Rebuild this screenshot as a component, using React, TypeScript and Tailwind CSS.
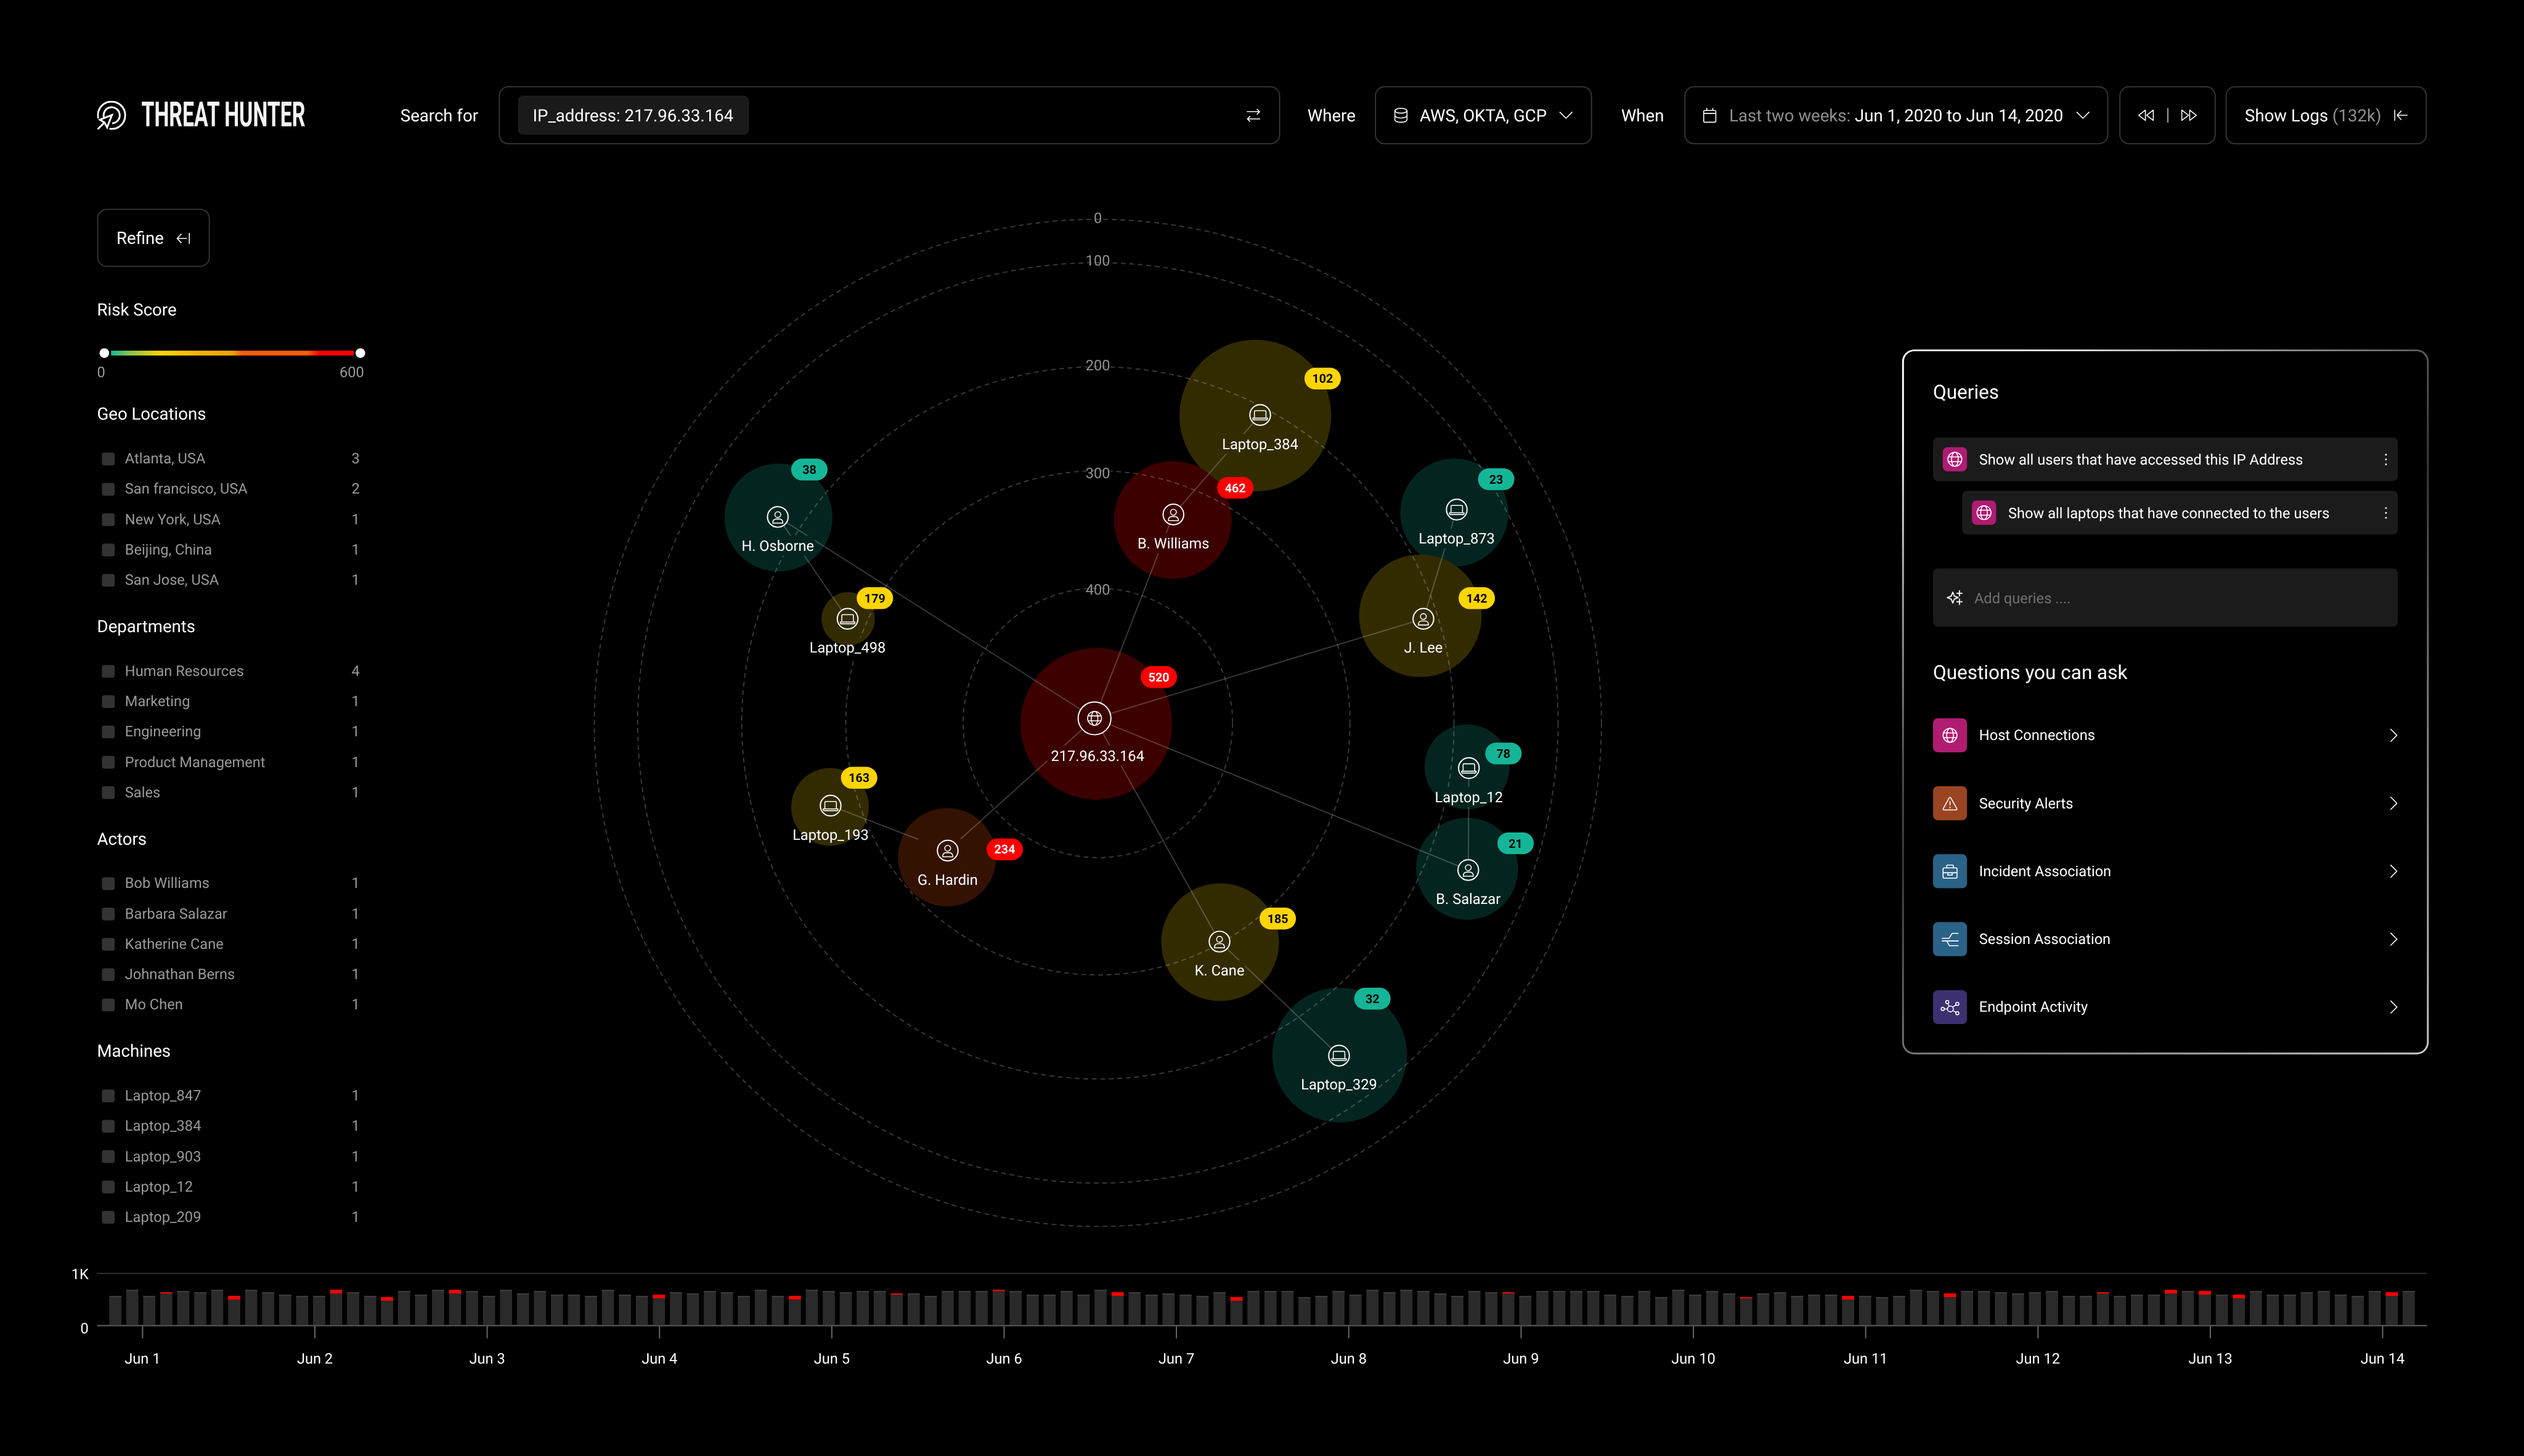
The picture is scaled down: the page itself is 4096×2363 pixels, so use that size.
import React from "react";

/* ---------- icons ---------- */

const stroke = {
  fill: "none",
  stroke: "currentColor",
  strokeWidth: 1.6,
} as const;

const LogoMark = () => (
  <svg viewBox="0 0 48 48" className="size-12" {...stroke} strokeWidth={3}>
    <path d="M1.9 29A22.5 22.5 0 1 1 20.5 46.3" />
    <path d="M11.2 27.5A13.3 13.3 0 1 1 25 37.3" />
    <path d="M24.5 23.5 4.5 31.3l7.6 4.4 4.4 8.3z" />
    <path d="M12.3 35.7 1 47" />
  </svg>
);

const SwapIcon = () => (
  <svg viewBox="0 0 24 24" className="size-6" {...stroke}>
    <path d="M1 6h21M17.5 1.5 22 6l-4.5 4.500M23 18H2M6.500 13.500 2 18l4.500 4.500" />
  </svg>
);

const DatabaseIcon = () => (
  <svg viewBox="0 0 24 26" className="h-[26px] w-6" {...stroke}>
    <path d="M2 5.500v15c0 2 4 4 10 4s10-2 10-4v-15" />
    <ellipse cx="12" cy="5.500" rx="10" ry="4" />
    <path d="M2 13.500c0 2 4 4 10 4s10-2 10-4" />
  </svg>
);

const CalendarIcon = () => (
  <svg viewBox="0 0 24 26" className="h-[26px] w-6" {...stroke}>
    <rect x="2" y="5" width="20" height="19.500" rx="2" />
    <path d="M2 10h20M7 1v4M17 1v4" />
  </svg>
);

const ChevronDown = () => (
  <svg viewBox="0 0 24 14" className="h-[14px] w-6" {...stroke}>
    <path d="M1.500 1.500 12 12 22.500 1.500" />
  </svg>
);

const ChevronRight = () => (
  <svg viewBox="0 0 14 24" className="h-6 w-[14px]" {...stroke}>
    <path d="M2 1.500 12.500 12 2 22.500" />
  </svg>
);

const RewindIcon = () => (
  <svg viewBox="0 0 28 20" className="h-5 w-7" {...stroke} strokeLinejoin="round">
    <path d="M13 1.500v17L2 10zM26 1.500v17L15 10z" />
  </svg>
);

const ForwardIcon = () => (
  <svg viewBox="0 0 28 20" className="h-5 w-7" {...stroke} strokeLinejoin="round">
    <path d="M2 1.500v17L13 10zM15 1.500v17L26 10z" />
  </svg>
);

const CollapseIcon = () => (
  <svg viewBox="0 0 24 20" className="h-5 w-6" {...stroke}>
    <path d="M22 1v18M18 10H2M9 2.500 2 10l7 7.500" />
  </svg>
);

const ExpandIcon = () => (
  <svg viewBox="0 0 24 20" className="h-5 w-6" {...stroke}>
    <path d="M2 1v18M23 10H6M13 2.500 6 10l7 7.500" />
  </svg>
);

const SparkleIcon = () => (
  <svg viewBox="0 0 28 26" className="h-[26px] w-7" {...stroke} strokeWidth={1.8}>
    <path d="M10.500 4 13 10.500l6.500 2.500-6.500 2.500L10.500 22 8 15.500 1.500 13 8 10.500z" strokeLinejoin="round" />
    <path d="M21.500 1v10M16.500 6h10M21.500 15v10M16.500 20h10" />
  </svg>
);

const GlobeShape = () => (
  <g>
    <circle r="11.500" />
    <ellipse rx="5.500" ry="11.500" />
    <path d="M-10.800-4h21.600M-10.800 4h21.600" />
  </g>
);

const UserShape = () => (
  <g>
    <circle cy="-3.800" r="4.800" />
    <path d="M-8.200 10.200V8.800A5.300 5.300 0 0 1-2.900 3.500h5.800A5.300 5.300 0 0 1 8.200 8.800v1.400z" />
  </g>
);

const LaptopShape = () => (
  <g>
    <path d="M-9.500 4.500v-10a1.500 1.500 0 0 1 1.500-1.500h16a1.500 1.500 0 0 1 1.500 1.500v10" />
    <path d="M-12 5.200h24v1.500a1.500 1.500 0 0 1-1.500 1.500h-21a1.500 1.500 0 0 1-1.500-1.500z" />
  </g>
);

const AlertShape = () => (
  <g strokeLinejoin="round">
    <path d="M-1.500-8.600a1.700 1.700 0 0 1 3 0l9.800 17.700a1.400 1.400 0 0 1-1.300 2h-20a1.400 1.400 0 0 1-1.300-2z" />
    <path d="M0-3.500v7M0 5.800v2.400" />
  </g>
);

const BriefcaseShape = () => (
  <g>
    <rect x="-11.500" y="-5.500" width="23" height="17" rx="2" />
    <path d="M-5.500-5.500v-3a1.500 1.500 0 0 1 1.500-1.500h8a1.500 1.500 0 0 1 1.500 1.500v3M-11.500 2.500h23M-3.500 2.500v4h7v-4" />
  </g>
);

const SessionShape = () => (
  <path d="M-13.500-1.500h12l5-8h10.500M-13.500 3H14M-5.500 3l4.500 7.800h15" />
);

const EndpointShape = () => (
  <g>
    <circle cx=".6" cy="3" r="4.800" />
    <circle cx="-4.600" cy="-8.300" r="2.600" />
    <circle cx="12" cy="-5.300" r="2.600" />
    <circle cx="-12" cy="3" r="2.600" />
    <circle cx="12" cy="10" r="2.600" />
    <path d="M-3.500-6-1.500-1.300M9.800-3.600 4.500 0M-9.400 3h5M9.800 8.600 4.600 5.700" />
  </g>
);

type Tile = { Shape: () => React.JSX.Element; tile: string };

const IconTile = ({ Shape, tile, small }: Tile & { small?: boolean }) => (
  <span
    className={`flex shrink-0 items-center justify-center rounded-lg ${tile} ${small ? "size-10" : "size-14"}`}
  >
    <svg viewBox="-16 -16 32 32" className="size-8" {...stroke}>
      <Shape />
    </svg>
  </span>
);

/* ---------- header ---------- */

const box = "flex h-24 shrink-0 items-center rounded-2xl border-2 border-[#333333]";

const Header = () => (
  <header className="flex h-24 items-center text-[28px]">
    <div className="flex w-[500px] shrink-0 items-center gap-[25px]">
      <LogoMark />
      <h1 className="w-[268px] origin-left scale-x-[0.603] pb-1 text-[57px] leading-none font-bold whitespace-nowrap text-[#f5f5f5]">
        THREAT HUNTER
      </h1>
    </div>
    <span className="w-[162px] shrink-0 pt-0.5">Search for</span>
    <div className={`${box} w-[1288px] justify-between pr-[30px] pl-[30px]`}>
      <span className="flex h-16 w-[380px] items-center rounded-lg border-2 border-[#1f1f1f] bg-[#1a1a1a] pt-0.5 pl-[22px]">
        IP_address: 217.96.33.164
      </span>
      <SwapIcon />
    </div>
    <span className="ml-[45px] w-[111px] shrink-0 pt-0.5">Where</span>
    <div className={`${box} w-[358px] pl-[29px]`}>
      <DatabaseIcon />
      <span className="ml-[19px] w-[229px] pt-0.5">AWS, OKTA, GCP</span>
      <ChevronDown />
    </div>
    <span className="ml-12 w-[104px] shrink-0 pt-0.5">When</span>
    <div className={`${box} w-[699px] pl-[28px]`}>
      <CalendarIcon />
      <span className="ml-[20px] w-[571px] pt-0.5 whitespace-nowrap">
        <span className="text-[#8f8f8f]">Last two weeks: </span>Jun 1, 2020 to Jun 14, 2020
      </span>
      <ChevronDown />
    </div>
    <div className={`${box} ml-[18px] w-[159px] justify-between px-[28px]`}>
      <RewindIcon />
      <span className="h-6 w-0.5 bg-[#a0a0a0]" />
      <ForwardIcon />
    </div>
    <div className={`${box} ml-4 w-[332px] justify-between pr-[29px] pl-[30px]`}>
      <span className="pt-0.5">
        Show Logs <span className="text-[#8f8f8f]">(132k)</span>
      </span>
      <ExpandIcon />
    </div>
  </header>
);

/* ---------- sidebar ---------- */

const groups: { title: string; items: [string, number][] }[] = [
  {
    title: "Geo Locations",
    items: [
      ["Atlanta, USA", 3],
      ["San francisco, USA", 2],
      ["New York, USA", 1],
      ["Beijing, China", 1],
      ["San Jose, USA", 1],
    ],
  },
  {
    title: "Departments",
    items: [
      ["Human Resources", 4],
      ["Marketing", 1],
      ["Engineering", 1],
      ["Product Management", 1],
      ["Sales", 1],
    ],
  },
  {
    title: "Actors",
    items: [
      ["Bob Williams", 1],
      ["Barbara Salazar", 1],
      ["Katherine Cane", 1],
      ["Johnathan Berns", 1],
      ["Mo Chen", 1],
    ],
  },
  {
    title: "Machines",
    items: [
      ["Laptop_847", 1],
      ["Laptop_384", 1],
      ["Laptop_903", 1],
      ["Laptop_12", 1],
      ["Laptop_209", 1],
    ],
  },
];

const Sidebar = () => (
  <aside className="w-[448px] shrink-0">
    <button className={`${box} w-[186px] gap-[20px] pt-0.5 pl-[30px] text-[28px]`}>
      Refine <CollapseIcon />
    </button>
    <h2 className="mt-[51px] text-[28px] leading-10">Risk Score</h2>
    <div className="mt-[43px] flex items-center gap-[3px] pl-1">
      <span className="size-4 rounded-full bg-white" />
      <span className="h-2 w-[400px] bg-[linear-gradient(90deg,#15b79a_0%,#8bc64a_8%,#ffd500_21%,#f5b800_34%,#f0a400_50%,#ff5c0c_54%,#ff5c0c_81%,#ff0000_86%)]" />
      <span className="size-4 rounded-full bg-white" />
    </div>
    <div className="mt-2 flex w-[440px] justify-between text-2xl text-[#999999]">
      <span>0</span>
      <span>600</span>
    </div>
    <div className="mt-[33px]">
      {groups.map((g) => (
        <section key={g.title} className="h-[350px]">
          <h2 className="text-[28px] leading-10">{g.title}</h2>
          <ul className="mt-7">
            {g.items.map(([name, count]) => (
              <li key={name} className="flex h-[50px] w-[433px] items-center pl-2 text-2xl text-[#999999]">
                <span className="size-[21px] rounded-sm bg-[#333333]" />
                <span className="ml-[17px] flex-1">{name}</span>
                <span>{count}</span>
              </li>
            ))}
          </ul>
        </section>
      ))}
    </div>
  </aside>
);

/* ---------- graph ---------- */

const OX = 960;
const OY = 344;
const CX = 1809.5;
const CY = 1191.5;

const rings = [
  { label: "0", r: 830, y: 360 },
  { label: "100", r: 758.5, y: 430 },
  { label: "200", r: 587, y: 602 },
  { label: "300", r: 415.5, y: 780 },
  { label: "400", r: 222, y: 972 },
];

type Tone = "red" | "yellow" | "teal" | "orange";

const discFill: Record<Tone, string> = {
  red: "#3c0000",
  yellow: "#332b00",
  teal: "#04251f",
  orange: "#331202",
};

const badgeTone: Record<Tone, string> = {
  red: "bg-[#ff0000] text-white",
  orange: "bg-[#ff0000] text-white",
  yellow: "bg-[#ffd500] text-black",
  teal: "bg-[#15b598] text-black",
};

type GraphNode = {
  id: string;
  kind: "user" | "laptop" | "ip";
  tone: Tone;
  disc: [number, number, number];
  icon: [number, number];
  w: number;
  score: number;
  badge: [number, number];
};

const nodes: GraphNode[] = [
  { id: "Laptop_384", kind: "laptop", tone: "yellow", disc: [2069, 685, 125], icon: [2077, 684], w: 125, score: 102, badge: [2180, 624] },
  { id: "B. Williams", kind: "user", tone: "red", disc: [1933, 857, 97], icon: [1934, 848], w: 117, score: 462, badge: [2036, 804] },
  { id: "Laptop_873", kind: "laptop", tone: "teal", disc: [2397, 845, 89], icon: [2401, 840], w: 125, score: 23, badge: [2466, 790] },
  { id: "J. Lee", kind: "user", tone: "yellow", disc: [2341, 1015, 101], icon: [2346, 1020], w: 63, score: 142, badge: [2434, 986] },
  { id: "217.96.33.164", kind: "ip", tone: "red", disc: [1807, 1193, 125], icon: [1804, 1184], w: 153, score: 520, badge: [1910, 1116] },
  { id: "Laptop_12", kind: "laptop", tone: "teal", disc: [2418, 1264, 70], icon: [2421, 1266], w: 112, score: 78, badge: [2478, 1242] },
  { id: "B. Salazar", kind: "user", tone: "teal", disc: [2418, 1432, 84], icon: [2420, 1434], w: 105, score: 21, badge: [2498, 1390] },
  { id: "H. Osborne", kind: "user", tone: "teal", disc: [1283, 853, 89], icon: [1282, 852], w: 120, score: 38, badge: [1334, 774] },
  { id: "Laptop_498", kind: "laptop", tone: "yellow", disc: [1398, 1020, 44], icon: [1397, 1020], w: 125, score: 179, badge: [1442, 986] },
  { id: "Laptop_193", kind: "laptop", tone: "yellow", disc: [1368, 1330, 64], icon: [1369, 1328], w: 125, score: 163, badge: [1416, 1282] },
  { id: "G. Hardin", kind: "user", tone: "orange", disc: [1561, 1413, 81], icon: [1562, 1402], w: 98, score: 234, badge: [1656, 1400] },
  { id: "K. Cane", kind: "user", tone: "yellow", disc: [2011, 1553, 97], icon: [2010, 1552], w: 82, score: 185, badge: [2106, 1514] },
  { id: "Laptop_329", kind: "laptop", tone: "teal", disc: [2208, 1739, 111], icon: [2207, 1740], w: 125, score: 32, badge: [2262, 1646] },
];

const links: [string, string][] = [
  ["217.96.33.164", "H. Osborne"],
  ["217.96.33.164", "B. Williams"],
  ["217.96.33.164", "J. Lee"],
  ["217.96.33.164", "B. Salazar"],
  ["217.96.33.164", "K. Cane"],
  ["217.96.33.164", "G. Hardin"],
  ["B. Williams", "Laptop_384"],
  ["J. Lee", "Laptop_873"],
  ["B. Salazar", "Laptop_12"],
  ["H. Osborne", "Laptop_498"],
  ["G. Hardin", "Laptop_193"],
  ["K. Cane", "Laptop_329"],
];

const byId = Object.fromEntries(nodes.map((n) => [n.id, n]));
const labelY = (n: GraphNode) => n.icon[1] + (n.kind === "ip" ? 62 : 48);

const Graph = () => (
  <section className="relative ml-[352px] h-[1700px] w-[1700px] shrink-0">
    <svg viewBox={`${OX} ${OY} 1700 1700`} className="size-full" fill="none">
      <mask id="clear" maskUnits="userSpaceOnUse" x={OX} y={OY} width="1700" height="1700">
        <rect x={OX} y={OY} width="1700" height="1700" fill="white" />
        {nodes.map((n) => (
          <g key={n.id} fill="black">
            <circle cx={n.icon[0]} cy={n.icon[1]} r={n.kind === "ip" ? 28 : 18} />
            <rect x={n.icon[0] - n.w / 2 - 1} y={labelY(n) - 17} width={n.w + 2} height="33" />
          </g>
        ))}
        <rect x="1513" y="1383" width="98" height="80" fill="black" />
      </mask>
      {nodes.map((n) => (
        <circle key={n.id} cx={n.disc[0]} cy={n.disc[1]} r={n.disc[2]} fill={discFill[n.tone]} />
      ))}
      <g mask="url(#clear)" stroke="white" strokeOpacity="0.22" strokeWidth="2">
        {rings.map((r) => (
          <circle key={r.label} cx={CX} cy={CY} r={r.r} strokeDasharray="8 6" />
        ))}
        {links.map(([a, b]) => (
          <line key={a + b} x1={byId[a].icon[0]} y1={byId[a].icon[1]} x2={byId[b].icon[0]} y2={byId[b].icon[1]} />
        ))}
      </g>
      <g stroke="white" strokeWidth="1.6">
        {nodes.map((n) => (
          <g key={n.id} transform={`translate(${n.icon[0]} ${n.icon[1]})`}>
            <circle r={n.kind === "ip" ? 27 : 17} strokeWidth="2" />
            {n.kind === "ip" && <GlobeShape />}
            {n.kind === "user" && <UserShape />}
            {n.kind === "laptop" && <LaptopShape />}
          </g>
        ))}
      </g>
    </svg>
    {rings.map((r) => (
      <span
        key={r.label}
        className="absolute -translate-x-1/2 -translate-y-1/2 text-2xl text-[#8f8f8f]"
        style={{ left: CX - OX, top: r.y - OY }}
      >
        {r.label}
      </span>
    ))}
    {nodes.map((n) => (
      <React.Fragment key={n.id}>
        <span
          className="absolute -translate-x-1/2 -translate-y-1/2 text-2xl whitespace-nowrap"
          style={{ left: n.icon[0] + (n.kind === "ip" ? 5 : 0) - OX, top: labelY(n) - OY }}
        >
          {n.id}
        </span>
        <span
          className={`absolute flex h-9 w-[60px] -translate-x-1/2 -translate-y-1/2 items-center justify-center rounded-full text-xl font-bold ${badgeTone[n.tone]}`}
          style={{ left: n.badge[0] - OX, top: n.badge[1] - OY }}
        >
          {n.score}
        </span>
      </React.Fragment>
    ))}
  </section>
);

/* ---------- queries panel ---------- */

const Dots = () => (
  <span className="flex w-[3px] flex-col gap-[5px]">
    <i className="size-[3px] rounded-full bg-white" />
    <i className="size-[3px] rounded-full bg-white" />
    <i className="size-[3px] rounded-full bg-white" />
  </span>
);

const Query = ({ text, nested }: { text: string; nested?: boolean }) => (
  <div
    className={`flex h-[72px] items-center rounded-lg bg-[#1b1b1b] pr-[18px] pl-4 text-2xl ${nested ? "mt-4 ml-12" : ""}`}
  >
    <IconTile Shape={GlobeShape} tile="bg-[#b01c72]" small />
    <span className="ml-5 flex-1 pt-px">{text}</span>
    <Dots />
  </div>
);

const questions: (Tile & { label: string })[] = [
  { label: "Host Connections", Shape: GlobeShape, tile: "bg-[#b01c72]" },
  { label: "Security Alerts", Shape: AlertShape, tile: "bg-[#9a4421]" },
  { label: "Incident Association", Shape: BriefcaseShape, tile: "bg-[#2a6288]" },
  { label: "Session Association", Shape: SessionShape, tile: "bg-[#2a6288]" },
  { label: "Endpoint Activity", Shape: EndpointShape, tile: "bg-[#3d3070]" },
];

const QueriesPanel = () => (
  <section className="mt-[232px] ml-[475px] h-[1162px] w-[868px] shrink-0 rounded-[20px] bg-[linear-gradient(143deg,#ffffff_8%,#b0b0b0_20%,#777777_32%,#555555_37%,#3a3a3a_47%,#777777_65%,#c8c8c8_100%)] p-[3px]">
    <div className="h-full rounded-[17px] bg-black px-12 pt-[47px]">
      <h2 className="text-[32px] leading-10">Queries</h2>
      <div className="mt-[55px]">
        <Query text="Show all users that have accessed this IP Address" />
        <Query text="Show all laptops that have connected to the users" nested />
      </div>
      <div className="mt-14 flex h-24 items-center gap-[18px] rounded-lg bg-[#1b1b1b] pl-[22px] text-2xl text-white">
        <SparkleIcon />
        <span className="pt-px text-[#707070]">Add queries ....</span>
      </div>
      <h2 className="mt-[55px] text-[32px] leading-10">Questions you can ask</h2>
      <ul className="mt-[56px] flex flex-col gap-14">
        {questions.map((q) => (
          <li key={q.label} className="flex h-14 items-center text-2xl">
            <IconTile Shape={q.Shape} tile={q.tile} />
            <span className="ml-5 flex-1">{q.label}</span>
            <ChevronRight />
          </li>
        ))}
      </ul>
    </div>
  </section>
);

/* ---------- timeline ---------- */

const bars = [
  48, 58, 48, 54, 56, 54, 58, 48, 58, 54, 50, 48, 48, 58, 54, 48, 46, 56, 50, 58, 58, 56, 48, 58, 52, 56, 50, 50, 48,
  58, 50, 48, 50, 54, 52, 56, 54, 48, 58, 48, 48, 58, 56, 54, 56, 56, 52, 52, 48, 56, 56, 56, 58, 56, 50, 50, 56, 50,
  58, 54, 54, 50, 52, 50, 48, 54, 46, 56, 56, 56, 46, 48, 56, 50, 58, 54, 58, 56, 52, 48, 56, 54, 54, 48, 56, 56, 56,
  56, 50, 48, 56, 46, 58, 50, 56, 52, 46, 52, 54, 48, 50, 50, 48, 48, 46, 48, 58, 56, 52, 56, 56, 54, 52, 54, 56, 48,
  48, 54, 48, 50, 50, 58, 56, 56, 50, 50, 56, 50, 50, 54, 56, 50, 48, 56, 54, 56,
];
const thinAlerts = new Set([3, 46, 52, 82, 96, 117]);
const alerts = new Set([7, 13, 16, 20, 32, 40, 59, 66, 102, 108, 121, 123, 125, 134]);

const capClass = (i: number) =>
  alerts.has(i) ? "h-1.5 bg-[#ff0000]" : thinAlerts.has(i) ? "h-0.5 bg-[#ff0000]" : "h-0.5 bg-[#3c3f3d]";

const Timeline = () => (
  <footer className="mt-[54px] flex text-2xl">
    <div className="-ml-[60px] flex h-[106px] w-[60px] shrink-0 flex-col items-end justify-between pr-[14px] leading-7">
      <span className="-mt-[12px]">1K</span>
      <span>0</span>
    </div>
    <div className="w-[3840px]">
      <div className="flex h-[88px] items-end gap-2 border-t-2 border-b-2 border-t-[#333333] border-b-[#666666] pl-5">
        {bars.map((h, i) => (
          <div key={i} className="w-5 bg-[#2a2a2a]" style={{ height: h }}>
            <div className={capClass(i)} />
          </div>
        ))}
      </div>
      <div className="-ml-[67px] flex">
        {Array.from({ length: 14 }, (_, i) => (
          <div key={i} className="flex w-[284px] shrink-0 flex-col items-center">
            <span className="h-5 w-0.5 bg-[#666666]" />
            <span className="mt-5 leading-7">Jun {i + 1}</span>
          </div>
        ))}
      </div>
    </div>
  </footer>
);

export default function App() {
  return (
    <div className="h-[2363px] w-[4096px] overflow-hidden bg-black">
      <div className="flex h-[2400px] w-[4160px] origin-top-left scale-[0.984615] flex-col bg-black px-[160px] pt-[142px] font-['Roboto',sans-serif] text-white [text-rendering:geometricPrecision]">
        <Header />
        <main className="mt-[106px] flex h-[1700px] shrink-0">
          <Sidebar />
          <Graph />
          <QueriesPanel />
        </main>
        <Timeline />
      </div>
    </div>
  );
}
